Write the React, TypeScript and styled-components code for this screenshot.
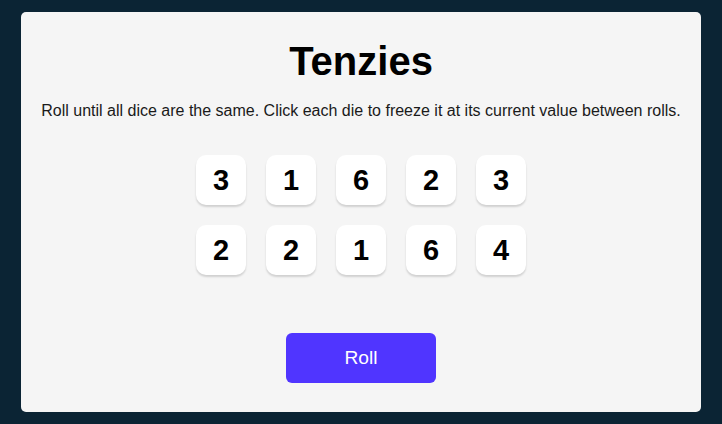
import React, { useState } from 'react';
import styled, { createGlobalStyle } from 'styled-components';

const GlobalStyle = createGlobalStyle`
  html, body {
    margin: 0;
    padding: 0;
    background: #0b2434;
  }
  body {
    font-family: "Liberation Sans", Arial, sans-serif;
  }
  * {
    box-sizing: border-box;
  }
`;

const Page = styled.div`
  padding: 12px 21px;
  min-height: 424px;
`;

const Board = styled.main`
  height: 400px;
  background: #f5f5f5;
  border-radius: 5px;
  display: flex;
  flex-direction: column;
  align-items: center;
`;

const Title = styled.h1`
  margin: 27px 0 0;
  font-size: 40px;
  font-weight: 700;
  color: #000;
`;

const Instructions = styled.p`
  margin: 18px 0 0;
  font-size: 16px;
  color: #1a1a1a;
  text-align: center;
`;

const DiceGrid = styled.div`
  margin-top: 35px;
  display: grid;
  grid-template-columns: repeat(5, 50px);
  grid-auto-rows: 50px;
  gap: 20px;
`;

const Die = styled.button<{ $held: boolean }>`
  width: 50px;
  height: 50px;
  border: none;
  border-radius: 10px;
  background: ${props => (props.$held ? '#59e391' : '#ffffff')};
  box-shadow: 0 2px 2px rgba(0, 0, 0, 0.15);
  font-family: "Liberation Sans", Arial, sans-serif;
  font-size: 29px;
  font-weight: 700;
  color: #000;
  cursor: pointer;
  padding: 0;
`;

const RollButton = styled.button`
  margin-top: 58px;
  width: 150px;
  height: 50px;
  border: none;
  border-radius: 6px;
  background: #5035ff;
  color: #fff;
  font-family: "Liberation Sans", Arial, sans-serif;
  font-size: 19.2px;
  cursor: pointer;
`;

const startValues = [3, 1, 6, 2, 3, 2, 2, 1, 6, 4];

const App = () => {
  const [dice, setDice] = useState(
    startValues.map((value, i) => ({ id: i, value, held: false }))
  );

  const hold = (id: number) =>
    setDice(old => old.map(d => (d.id === id ? { ...d, held: !d.held } : d)));

  const roll = () =>
    setDice(old =>
      old.map(d => (d.held ? d : { ...d, value: Math.ceil(Math.random() * 6) }))
    );

  return (
    <>
      <GlobalStyle />
      <Page>
        <Board>
          <Title>Tenzies</Title>
          <Instructions>
            Roll until all dice are the same. Click each die to freeze it at its current value between rolls.
          </Instructions>
          <DiceGrid>
            {dice.map(d => (
              <Die key={d.id} $held={d.held} onClick={() => hold(d.id)}>
                {d.value}
              </Die>
            ))}
          </DiceGrid>
          <RollButton onClick={roll}>Roll</RollButton>
        </Board>
      </Page>
    </>
  );
};

export default App;
